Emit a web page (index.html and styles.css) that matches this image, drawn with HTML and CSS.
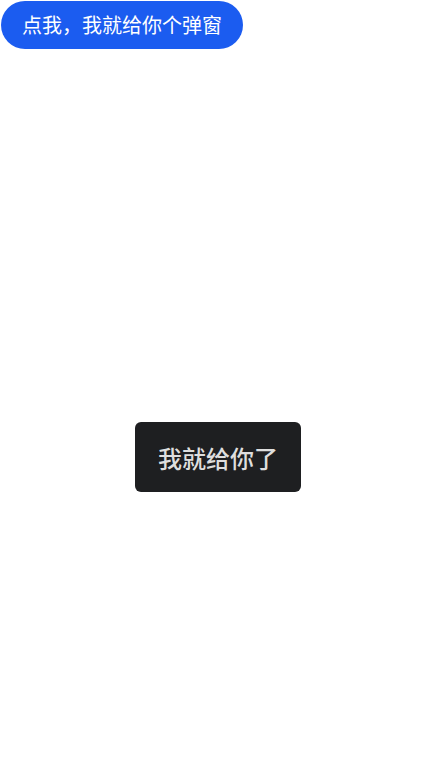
FILE: index.html
```html
<!DOCTYPE html>
<html lang="zh-CN">
<head>
<meta charset="utf-8">
<title>弹窗</title>
<link rel="stylesheet" href="styles.css">
</head>
<body>
<main class="screen">
  <button class="action-btn" type="button">点我，我就给你个弹窗</button>
</main>
<div class="toast">我就给你了</div>
</body>
</html>
```
FILE: styles.css
```css
html, body {
  margin: 0;
  padding: 0;
  background: #ffffff;
  font-family: "Noto Sans CJK SC", "Noto Sans", sans-serif;
}
.screen {
  width: 436px;
  height: 762px;
  padding: 1px 0 0 1px;
  box-sizing: border-box;
}
.action-btn {
  display: block;
  height: 48px;
  padding: 0 21px;
  border: none;
  border-radius: 24px;
  background: #1b5cf0;
  color: #ffffff;
  font-family: "Noto Sans CJK SC", "Noto Sans", sans-serif;
  font-size: 20px;
  line-height: 48px;
  white-space: nowrap;
}
.toast {
  position: fixed;
  top: 422px;
  left: 50%;
  transform: translateX(-50%);
  width: 166px;
  height: 70px;
  box-sizing: border-box;
  display: flex;
  align-items: center;
  justify-content: center;
  background: #1e1f21;
  border-radius: 6px;
  color: #dedede;
  font-size: 24px;
  font-weight: 500;
  white-space: nowrap;
}
```
